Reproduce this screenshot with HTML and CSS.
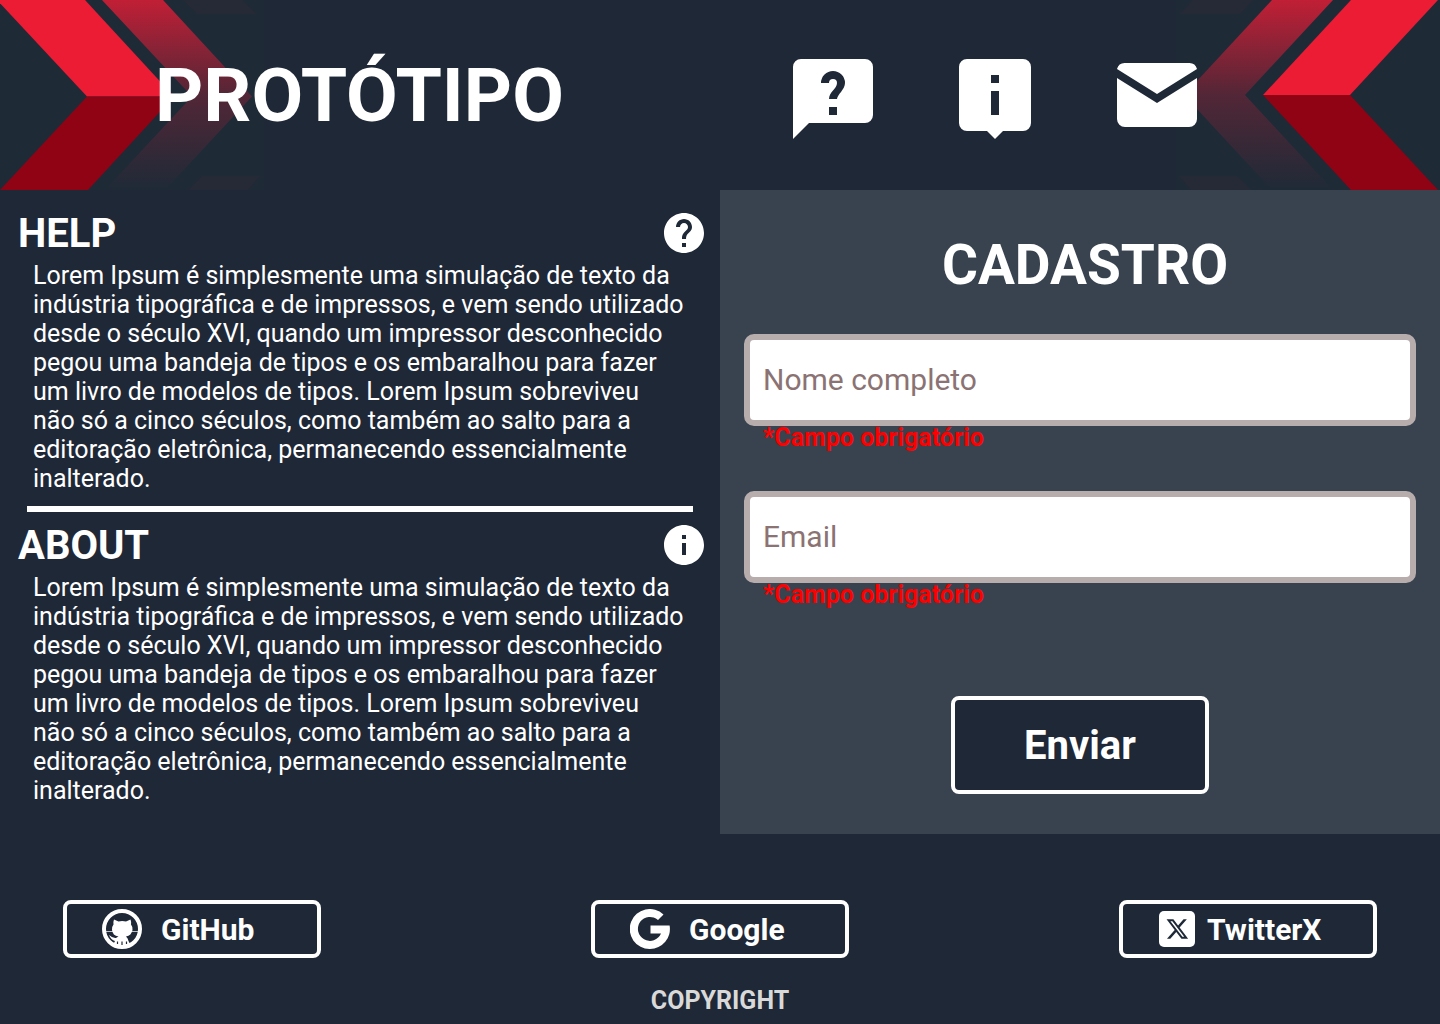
FILE: index.html
```html
<!DOCTYPE html>
<html lang="pt-BR">
<head>
<meta charset="utf-8">
<meta name="viewport" content="width=device-width, initial-scale=1">
<title>Protótipo</title>
<link rel="stylesheet" href="styles.css">
</head>
<body>
<header class="header">
  <svg class="chevrons chevrons-left" width="264" height="190" viewBox="0 0 264 190" aria-hidden="true">
    <defs>
      <linearGradient id="fade" x1="0" y1="0" x2="0" y2="190" gradientUnits="userSpaceOnUse">
        <stop offset="0" stop-color="#ec1c35" stop-opacity=".79"/>
        <stop offset=".5" stop-color="#ec1c35" stop-opacity=".25"/>
        <stop offset="1" stop-color="#ec1c35" stop-opacity="0"/>
      </linearGradient>
    </defs>
    <path fill="#eb1c34" d="M-3 0H85L174 96.500H87z"/>
    <path fill="#8f0315" d="M87 96.500H174L88 190H0z"/>
    <path fill="url(#fade)" d="M102 0H163L252 96.500L165 190H105L192 96.500z"/>
    <path fill="#ec1c35" fill-opacity=".04" d="M183 0H243L256 14H197zM188 190H248L260 176H202z"/>
  </svg>
  <svg class="chevrons chevrons-right" width="264" height="190" viewBox="1176 0 264 190" aria-hidden="true">
    <path fill="#eb1c34" d="M1351 0H1438L1350 95H1263z"/>
    <path fill="#8f0315" d="M1263 95H1350L1438 190H1351z"/>
    <path fill="url(#fade)" d="M1272 0H1333L1245 95L1333 190H1272L1184 95z"/>
    <path fill="#ec1c35" fill-opacity=".04" d="M1193 0H1253L1240 14H1180zM1191 190H1251L1237 176H1179z"/>
  </svg>
  <h1 class="title">PROTÓTIPO</h1>
  <nav class="nav">
    <a href="#help" aria-label="Help">
      <svg class="nav-icon" viewBox="0 -1 24 24"><path fill="#fff" fill-rule="evenodd" d="M4 2H20a2 2 0 0 1 2 2V16a2 2 0 0 1-2 2H6L2 22V4a2 2 0 0 1 2-2zM9 8H11a1 1 0 0 1 2 0C13 9.500 11 10.200 11 12H13C13 11 15 9.600 15 8A3 3 0 0 0 9 8zM11 14V16H13V14z"/></svg>
    </a>
    <a href="#about" aria-label="About">
      <svg class="nav-icon" viewBox="0 -1 24 24"><path fill="#fff" fill-rule="evenodd" d="M5 2H19a2 2 0 0 1 2 2V18a2 2 0 0 1-2 2H14L12 22L10 20H5a2 2 0 0 1-2-2V4a2 2 0 0 1 2-2zM11 6V8H13V6zM11 10V16H13V10z"/></svg>
    </a>
    <a href="#cadastro" aria-label="Cadastro">
      <svg class="nav-icon" viewBox="0 0 24 24"><path fill="#fff" d="M2 5.500A2 2 0 0 1 4 4H20A2 2 0 0 1 22 5.500L12 11.750zM2 7.750L12 14L22 7.750V18a2 2 0 0 1-2 2H4a2 2 0 0 1-2-2z"/></svg>
    </a>
  </nav>
</header>

<main class="main">
  <div class="info">
    <section class="topic" id="help">
      <div class="topic-head">
        <h2>HELP</h2>
        <svg class="topic-icon" viewBox="2 2 20 20" aria-hidden="true"><path fill="#fff" d="M12 2C6.480 2 2 6.480 2 12s4.480 10 10 10 10-4.480 10-10S17.520 2 12 2zm1 17h-2v-2h2v2zm2.070-7.750l-.9.920C13.450 12.900 13 13.500 13 15h-2v-.5c0-1.100.45-2.100 1.170-2.830l1.240-1.260c.37-.36.59-.86.59-1.410 0-1.100-.9-2-2-2s-2 .9-2 2H8c0-2.210 1.790-4 4-4s4 1.790 4 4c0 .88-.36 1.680-.93 2.250z"/></svg>
      </div>
      <p>Lorem Ipsum é simplesmente uma simulação de texto da indústria tipográfica e de impressos, e vem sendo utilizado desde o século XVI, quando um impressor desconhecido pegou uma bandeja de tipos e os embaralhou para fazer um livro de modelos de tipos. Lorem Ipsum sobreviveu não só a cinco séculos, como também ao salto para a editoração eletrônica, permanecendo essencialmente inalterado.</p>
    </section>
    <hr class="divider">
    <section class="topic" id="about">
      <div class="topic-head">
        <h2>ABOUT</h2>
        <svg class="topic-icon" viewBox="2 2 20 20" aria-hidden="true"><path fill="#fff" d="M12 2C6.480 2 2 6.480 2 12s4.480 10 10 10 10-4.480 10-10S17.520 2 12 2zm1 15h-2v-6h2v6zm0-8h-2V7h2v2z"/></svg>
      </div>
      <p>Lorem Ipsum é simplesmente uma simulação de texto da indústria tipográfica e de impressos, e vem sendo utilizado desde o século XVI, quando um impressor desconhecido pegou uma bandeja de tipos e os embaralhou para fazer um livro de modelos de tipos. Lorem Ipsum sobreviveu não só a cinco séculos, como também ao salto para a editoração eletrônica, permanecendo essencialmente inalterado.</p>
    </section>
  </div>

  <form class="form" id="cadastro">
    <h2 class="form-title">CADASTRO</h2>
    <div class="field">
      <input type="text" id="nome" placeholder="Nome completo" aria-label="Nome completo" aria-describedby="nome-erro">
      <label class="error" id="nome-erro" for="nome">*Campo obrigatório</label>
    </div>
    <div class="field">
      <input type="email" id="email" placeholder="Email" aria-label="Email" aria-describedby="email-erro">
      <label class="error" id="email-erro" for="email">*Campo obrigatório</label>
    </div>
    <button class="submit" type="submit">Enviar</button>
  </form>
</main>

<footer class="footer">
  <div class="social">
    <a class="social-link" href="#github">
      <svg width="40" height="40" viewBox="0 0 40 40" aria-hidden="true">
        <circle cx="20" cy="20" r="18" fill="none" stroke="#fff" stroke-width="4"/>
        <path fill="#fff" d="M12 10.500L16.500 12.500Q20 11.700 24 12.500L28.500 10.500Q29.500 13 29 15.500Q31 18 30.500 21Q29.500 26.500 24 27.500Q26 29 26.500 32L28.500 36H11L13 32Q9 31 7 26Q11 29.500 14 29Q15 28 16.500 27.500Q10.500 26.500 10 21Q9.500 18 11.500 15.500Q11 13 12 10.500z"/>
        <path fill="none" stroke="#fff" stroke-opacity=".7" d="M4 22.500H11M29 22.500H36"/>
        <path fill="none" stroke="#1f2837" stroke-width="1.200" d="M15.500 32.500V35M20 32.500V36M24.500 32.500V35"/>
      </svg>
      <span>GitHub</span>
    </a>
    <a class="social-link" href="#google">
      <svg width="40" height="40" viewBox="0 0 40 40" aria-hidden="true"><path fill="#fff" d="M33.500 5.500L28 11A12 12 0 1 0 31 24.500H20.500V16.500H39.600A20 20 0 0 1 20 40A20 20 0 1 1 33.500 5.500z"/></svg>
      <span>Google</span>
    </a>
    <a class="social-link social-link-x" href="#twitterx">
      <svg width="36" height="36" viewBox="0 0 36 36" aria-hidden="true">
        <rect width="36" height="36" rx="5" fill="#fff"/>
        <path fill="#1f2837" transform="translate(6.300 6)" d="M18.244 2.250h3.308l-7.227 8.260 8.502 11.240H16.170l-5.214-6.817L4.990 21.750H1.680l7.730-8.835L1.254 2.250H8.080l4.713 6.231zm-1.161 17.520h1.833L7.084 4.126H5.117z"/>
      </svg>
      <span>TwitterX</span>
    </a>
  </div>
  <p class="copyright">COPYRIGHT</p>
</footer>
</body>
</html>
```
FILE: styles.css
```css
* {
  box-sizing: border-box;
}

body {
  margin: 0;
  min-height: 100vh;
  background: #1f2837;
  color: #fff;
  font-family: Roboto, "Liberation Sans", sans-serif;
}

h1,
h2,
p {
  margin: 0;
}

a {
  color: inherit;
  text-decoration: none;
}

svg {
  display: block;
  flex: none;
}

.header {
  position: relative;
  display: flex;
  align-items: center;
  justify-content: space-between;
  height: 190px;
  padding: 0 235px 0 155px;
  overflow: hidden;
}

.chevrons {
  position: absolute;
  top: 0;
  background: #1f2a37;
}

.chevrons-left {
  left: 0;
}

.chevrons-right {
  right: 0;
}

.title {
  position: relative;
  font-size: 75px;
  font-weight: 700;
  line-height: 88px;
}

.nav {
  position: relative;
  display: flex;
  gap: 66px;
}

.nav-icon {
  width: 96px;
  height: 96px;
}

.main {
  display: grid;
  grid-template-columns: 1fr 1fr;
}

.info {
  padding: 19px 16px 29px 18px;
}

.topic-head {
  display: flex;
  align-items: center;
  justify-content: space-between;
  height: 48px;
}

.topic h2 {
  padding-top: 2px;
  font-size: 40px;
  line-height: 48px;
}

.topic p {
  padding: 4px 18px 0 15px;
  font-size: 25px;
  line-height: 29px;
}

.topic-icon {
  width: 40px;
  height: 40px;
}

.divider {
  height: 6px;
  margin: 13px 11px 9px 9px;
  border: 0;
  background: #fff;
}

.form {
  display: flex;
  flex-direction: column;
  padding: 42px 24px 40px;
  background: #39434f;
}

.form-title {
  padding-left: 10px;
  margin-bottom: 36px;
  font-size: 55px;
  line-height: 66px;
  text-align: center;
}

.field {
  display: flex;
  flex-direction: column;
  margin-bottom: 41px;
}

.field input {
  width: 100%;
  height: 92px;
  padding: 0 13px 2px;
  border: 6px solid #b8adad;
  border-radius: 10px;
  background: #fff;
  color: #1f2837;
  font: inherit;
  font-size: 30px;
}

.field input::placeholder {
  color: #8b7373;
  opacity: 1;
}

.error {
  padding-left: 19px;
  color: #f00;
  font-size: 25px;
  font-weight: 700;
  line-height: 24px;
}

.submit {
  align-self: center;
  width: 258px;
  height: 98px;
  margin-top: 48px;
  border: 4px solid #fff;
  border-radius: 8px;
  background: #1f2837;
  color: #fff;
  font: inherit;
  font-size: 40px;
  font-weight: 700;
}

.footer {
  padding: 66px 63px 8px;
}

.social {
  display: flex;
  justify-content: space-between;
}

.social-link {
  display: flex;
  align-items: center;
  gap: 19px;
  width: 258px;
  height: 58px;
  padding-left: 35px;
  border: 4px solid #fff;
  border-radius: 8px;
  font-size: 30px;
  font-weight: 700;
}

.social-link-x {
  gap: 12px;
  padding-left: 36px;
}

.copyright {
  margin-top: 28px;
  color: #d9d9d9;
  font-size: 25px;
  font-weight: 700;
  line-height: 30px;
  text-align: center;
}
```
